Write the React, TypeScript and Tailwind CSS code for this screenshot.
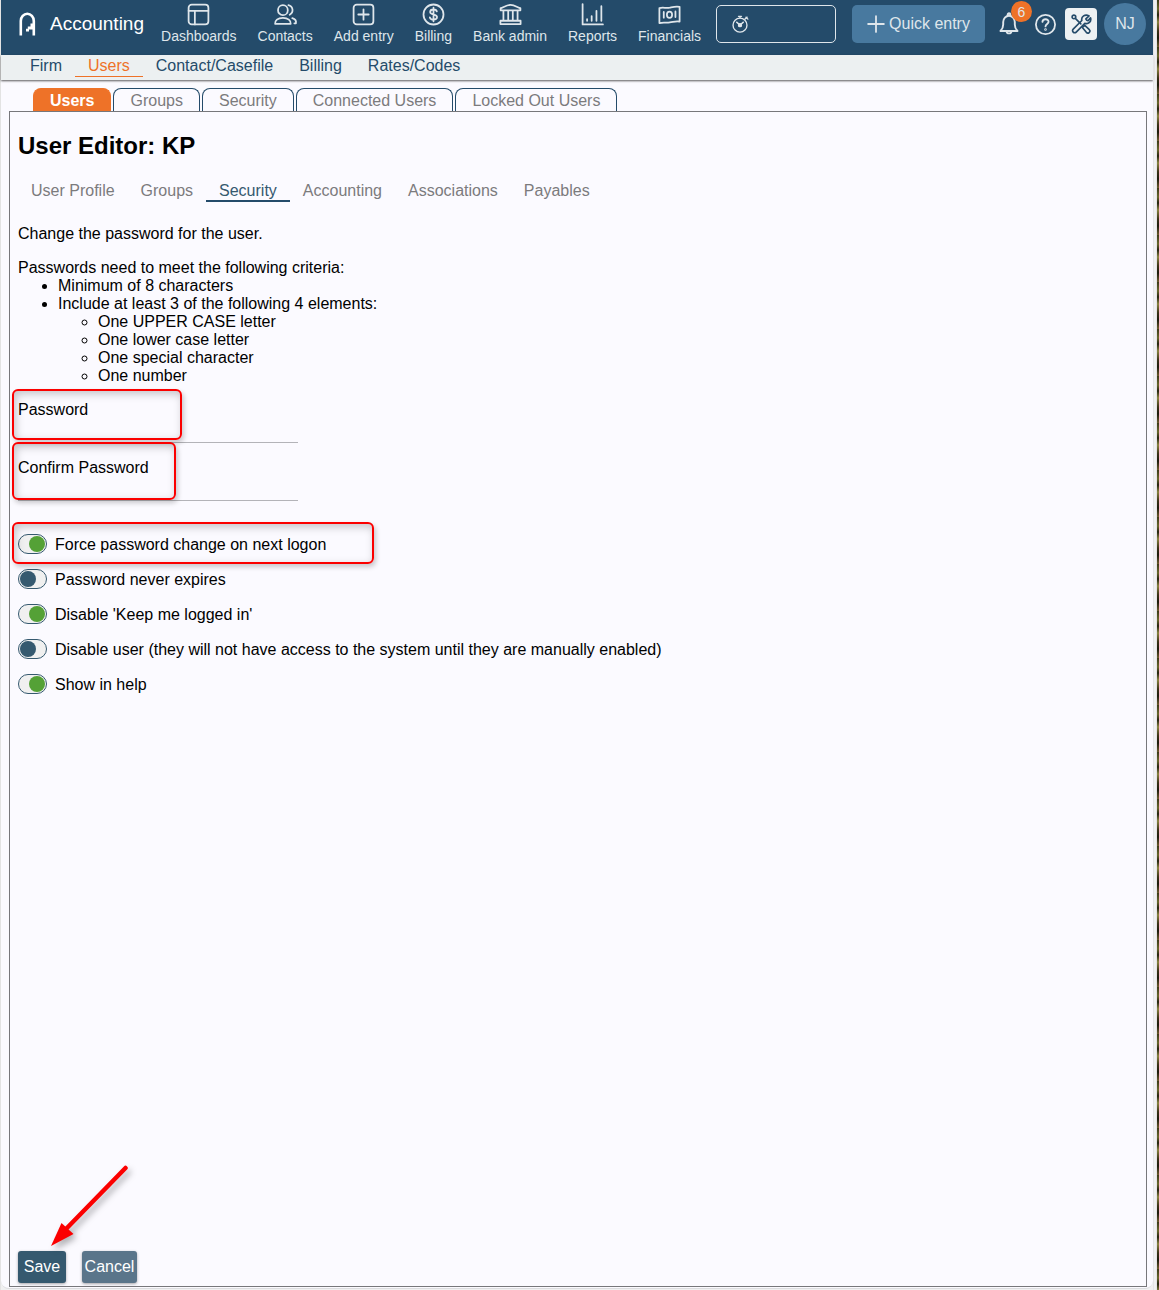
import React, { useState } from "react";

type IconProps = { className?: string; children: React.ReactNode; box?: string; stroke?: number };

function Icon({ className = "size-6", children, box = "0 0 24 24", stroke = 1.7 }: IconProps) {
  return (
    <svg viewBox={box} className={className} fill="none" stroke="currentColor" strokeWidth={stroke} strokeLinecap="round" strokeLinejoin="round" aria-hidden="true">
      {children}
    </svg>
  );
}

const mainNav = [
  {
    label: "Dashboards",
    icon: (
      <>
        <rect x="2.5" y="2.5" width="19" height="19" rx="3" />
        <path d="M2.5 8.5h19M8.5 8.5v13" />
      </>
    ),
  },
  {
    label: "Contacts",
    icon: (
      <>
        <ellipse cx="9.500" cy="7.800" rx="4.700" ry="4.900" />
        <path d="M2 21c-.3-3.200 2.500-5.800 7.500-5.800s7.800 2.600 7.500 5.800zM14.800 3a4.900 4.900 0 0 1 1.200 9.200M18.500 15.500c2.600.8 4 2.600 3.500 5h-1.500" />
      </>
    ),
  },
  {
    label: "Add entry",
    icon: (
      <>
        <rect x="2.5" y="2.5" width="19" height="19" rx="3" />
        <path d="M12 7v10M7 12h10" />
      </>
    ),
  },
  {
    label: "Billing",
    icon: (
      <>
        <circle cx="12" cy="12" r="9.6" />
        <path d="M12 5.500v13M15.200 9c-.4-1.200-1.500-1.800-3.200-1.800-1.900 0-3.200.9-3.200 2.400 0 3.400 6.600 1.500 6.600 4.900 0 1.500-1.400 2.400-3.400 2.400-1.800 0-3.100-.7-3.500-2.100" />
      </>
    ),
  },
  {
    label: "Bank admin",
    icon: (
      <>
        <path d="M2.500 8V6c2-.2 5.500-3.300 9.500-3.300S19.500 5.800 21.500 6v2zM2.300 18h19.400v3.200H2.300zM5.200 8.200V18M9.800 8.200V18M14.200 8.200V18M18.800 8.200V18" />
      </>
    ),
  },
  {
    label: "Reports",
    icon: (
      <>
        <path d="M2.500 2v19.500H22M6.800 18v-1.500M11.200 18v-4.500M15.800 18V8.500M20.500 18V4" />
      </>
    ),
  },
  {
    label: "Financials",
    icon: (
      <>
        <path d="M2.300 5.800c4-1 6 .4 10-.4 3.500-.8 6-1.600 9.400-.8v14.200c-3.400-.8-6 .4-9.400.8-4 .6-6-.4-10 .6zM6.500 9.500v5.500M17.700 9v5.500" />
        <ellipse cx="12" cy="12.300" rx="2.500" ry="3" />
      </>
    ),
  },
];

const sections = ["Firm", "Users", "Contact/Casefile", "Billing", "Rates/Codes"];
const userTabs = ["Users", "Groups", "Security", "Connected Users", "Locked Out Users"];
const editorTabs = ["User Profile", "Groups", "Security", "Accounting", "Associations", "Payables"];

const options = [
  { id: "force", label: "Force password change on next logon", on: true },
  { id: "never", label: "Password never expires", on: false },
  { id: "keep", label: "Disable 'Keep me logged in'", on: true },
  { id: "disable", label: "Disable user (they will not have access to the system until they are manually enabled)", on: false },
  { id: "help", label: "Show in help", on: true },
];

function Highlight({ className }: { className: string }) {
  return (
    <span
      aria-hidden="true"
      className={`pointer-events-none absolute rounded-md border-2 border-[#fb0000] shadow-[2px_3px_5px_rgba(0,0,0,0.2),inset_2px_3px_8px_rgba(0,0,0,0.22)] ${className}`}
    />
  );
}

function Header() {
  return (
    <header className="flex h-[55px] shrink-0 bg-[#244b6a] pr-[7px] pl-[17px] text-[#dfe6eb]">
      <a href="#" className="mt-[11px] flex h-[26px] items-center gap-3.5 text-[19px] text-white">
        <svg viewBox="0 0 18 24" className="h-6 w-[18px]" aria-hidden="true">
          <path d="M2.800 23.500V9a6.500 7.200 0 0 1 13 0V23.500" fill="none" stroke="white" strokeWidth="2.600" />
          <path d="M16 11.500h-3.500v3H9.800v2.200H8v2.800h3v-2h5z" fill="white" />
        </svg>
        Accounting
      </a>
      <nav className="ml-[17px] flex gap-[21px]">
        {mainNav.map((item) => (
          <a key={item.label} href="#" className="flex flex-col items-center pt-[2px] text-sm leading-[18px] whitespace-nowrap">
            <Icon className="size-[25px]">{item.icon}</Icon>
            {item.label}
          </a>
        ))}
      </nav>
      <div className="ml-auto flex pt-[5px]">
        <button aria-label="Timer" className="flex h-[38px] w-[120px] items-center rounded-[5px] border border-[#dfe6eb] pl-[14px]">
          <Icon className="size-[18px]" stroke={1.8}>
            <circle cx="12" cy="13.500" r="9.300" />
            <path d="M7.500 9.500l4.500 4 4.500-4M10 1.800h4M12 2v2M18.500 5.500l3-2.500M20 3l2.500 2.500" />
            <circle cx="12" cy="13.500" r="2" fill="currentColor" />
          </Icon>
        </button>
        <button className="ml-4 flex h-[38px] w-[133px] items-center justify-center gap-1 rounded-[5px] bg-[#48799f]">
          <Icon className="size-[18px]" stroke={2.4}>
            <path d="M12 1.500v21M1.500 12h21" />
          </Icon>
          Quick entry
        </button>
        <button aria-label="Notifications" className="relative ml-[14px] flex h-[38px] w-5 items-center justify-center">
          <Icon className="h-6 w-5" box="0 0 20 24" stroke={1.9}>
            <path d="M1.500 19h17c-2-2-2.700-3-2.700-6.500V10a5.800 6.300 0 0 0-11.600 0v2.500c0 3.500-.7 4.500-2.700 6.500zM8.700 3.500V2.500a1.300 1.300 0 0 1 2.600 0v1M7.500 19.300c.5 2.800 4.500 2.800 5 0" />
          </Icon>
          <span className="absolute -top-1 left-3 flex size-[21px] items-center justify-center rounded-full bg-[#ee7228] text-sm">6</span>
        </button>
        <button aria-label="Help" className="ml-[15px] flex h-[38px] items-center">
          <Icon className="size-[23px]" stroke={1.9}>
            <circle cx="12" cy="12" r="10" />
            <path d="M8.800 9.300c.2-3.800 6.600-3.600 6.400 0-.1 2-3.200 2.300-3.200 4.700" />
            <circle cx="12" cy="17.300" r=".4" fill="currentColor" />
          </Icon>
        </button>
        <button aria-label="Settings" className="mt-[3px] ml-2 flex size-8 items-center justify-center rounded-[4px] bg-[#edf1f3] text-[#244b6a]">
          <Icon className="size-[22px]" stroke={1.8}>
            <circle cx="4.300" cy="4.300" r="2" />
            <path d="M5.800 5.800l6 6M13.500 15.800l4.300 5.300a2.100 2.100 0 0 0 3.300-2.900l-5-4.700z" />
            <path d="M20.800 3.200l-3.500 3.300 1 1.400 1.400.5 2.700-3.100c1.200 4-2.200 7.200-6.200 6L6.800 20.800c-2.200 2.200-5.500-1.100-3.300-3.300l9.400-9.300c-1-4.200 3.500-7.600 7.900-5z" />
          </Icon>
        </button>
        <button className="-mt-0.5 ml-[7px] flex size-[42px] items-center justify-center rounded-full bg-[#48799f]">NJ</button>
      </div>
    </header>
  );
}

function PasswordField({ id, label, highlight }: { id: string; label: string; highlight: string }) {
  return (
    <div className="relative h-[58px] w-[280px]">
      <label htmlFor={id} className="block">{label}</label>
      <input id={id} type="password" className="block h-6 w-full border-b border-[#b3b3b8] bg-transparent outline-none" />
      <Highlight className={highlight} />
    </div>
  );
}

function Toggles() {
  const [values, setValues] = useState<Record<string, boolean>>(Object.fromEntries(options.map((o) => [o.id, o.on])));
  return (
    <div className="relative mt-[10px]">
      {options.map((option) => (
        <div key={option.id} className="flex h-[35px] items-center">
          <input
            id={option.id}
            type="checkbox"
            checked={values[option.id]}
            onChange={(e) => setValues({ ...values, [option.id]: e.target.checked })}
            className="mb-0.5 h-5 w-[29px] shrink-0 appearance-none rounded-full border border-[#35596f] bg-[#f0f0f0] p-px before:block before:size-4 before:rounded-full before:bg-[#35596f] checked:before:ml-[9px] checked:before:bg-[#54a136]"
          />
          <label htmlFor={option.id} className="pl-2">{option.label}</label>
        </div>
      ))}
      <Highlight className="-top-[5px] -left-[6px] h-[42px] w-[362px]" />
    </div>
  );
}

export default function App() {
  return (
    <div className="flex min-h-screen border-l border-[#e3e3e3] bg-[#f0f0f1] font-['Liberation_Sans',Arial,sans-serif] text-base leading-[18px] text-black">
      <div className="mb-px flex min-w-0 flex-1 flex-col rounded-b-lg border-b border-[#dcdcdf] bg-[#fbfaff]">
        <Header />
        <nav className="flex h-[25px] shrink-0 bg-[#ecf0f1] pl-4 text-[#244b6a] shadow-[0_1px_2px_rgba(0,0,0,0.65)]">
          {sections.map((item) => (
            <a
              key={item}
              href="#"
              className={item === "Users" ? "h-[22px] border-b border-[#ee7228] px-[13px] pt-[2px] text-[#ee7228]" : "h-[22px] px-[13px] pt-[2px]"}
            >
              {item}
            </a>
          ))}
        </nav>

        <div className="mt-2 flex gap-0.5 pl-8 text-[#7b7b7d]">
          {userTabs.map((item) => (
            <a
              key={item}
              href="#"
              className={
                item === "Users"
                  ? "h-[23px] rounded-t-lg border border-b-0 border-[#ee7228] bg-[#ee7228] px-4 pt-[3px] font-bold text-white"
                  : "h-[23px] rounded-t-lg border border-b-0 border-[#244b6a] px-4 pt-[3px]"
              }
            >
              {item}
            </a>
          ))}
        </div>

        <main className="mr-[6px] mb-px ml-2 flex flex-1 flex-col border border-[#77777b] px-2 pb-[3px]">
          <h1 className="mt-5 text-2xl leading-7 font-bold">User Editor: KP</h1>
          <nav className="mt-5 flex text-[#7b7b7d]">
            {editorTabs.map((item) => (
              <a
                key={item}
                href="#"
                className={item === "Security" ? "h-[22px] border-b-2 border-[#244b6a] px-[13px] pt-[2px] text-[#35596f]" : "h-[22px] px-[13px] pt-[2px]"}
              >
                {item}
              </a>
            ))}
          </nav>
          <p className="mt-[23px]">Change the password for the user.</p>
          <p className="mt-4">Passwords need to meet the following criteria:</p>
          <ul className="list-disc pl-10">
            <li>Minimum of 8 characters</li>
            <li>
              Include at least 3 of the following 4 elements:
              <ul className="list-[circle] pl-10">
                <li>One UPPER CASE letter</li>
                <li>One lower case letter</li>
                <li>One special character</li>
                <li>One number</li>
              </ul>
            </li>
          </ul>
          <form className="mt-4 flex flex-1 flex-col" onSubmit={(e) => e.preventDefault()}>
            <PasswordField id="password" label="Password" highlight="-top-3 -left-[6px] h-[51px] w-[170px]" />
            <PasswordField id="confirm" label="Confirm Password" highlight="-top-[17px] -left-[6px] h-[58px] w-[164px]" />
            <Toggles />
            <div className="relative mt-auto flex gap-4">
              <button type="submit" className="h-8 w-12 rounded-[3px] bg-[#35596f] text-white shadow-[0_1px_3px_rgba(0,0,0,0.35)]">Save</button>
              <button type="button" className="h-8 w-[55px] rounded-[3px] bg-[#5a758a] text-white shadow-[0_1px_3px_rgba(0,0,0,0.35)]">Cancel</button>
              <svg viewBox="0 0 90 90" className="pointer-events-none absolute bottom-[34px] left-[30px] size-[90px] drop-shadow-[3px_4px_3px_rgba(0,0,0,0.3)]" aria-hidden="true">
                <path d="M77.500 9L18 70" stroke="#fb0000" strokeWidth="4.500" strokeLinecap="round" />
                <path d="M3 87L13.500 64l12 11z" fill="#fb0000" />
              </svg>
            </div>
          </form>
        </main>
      </div>
      <div className="w-1 shrink-0 border-x border-[#e4e4e6]" />
      <div className="w-0.5 shrink-0 bg-[repeating-linear-gradient(180deg,#3c3a18_0,#6a682c_9px,#25240f_15px,#8a8440_22px,#3a3216_31px,#1d1c0c_38px,#6d5c2c_47px)]" />
    </div>
  );
}
